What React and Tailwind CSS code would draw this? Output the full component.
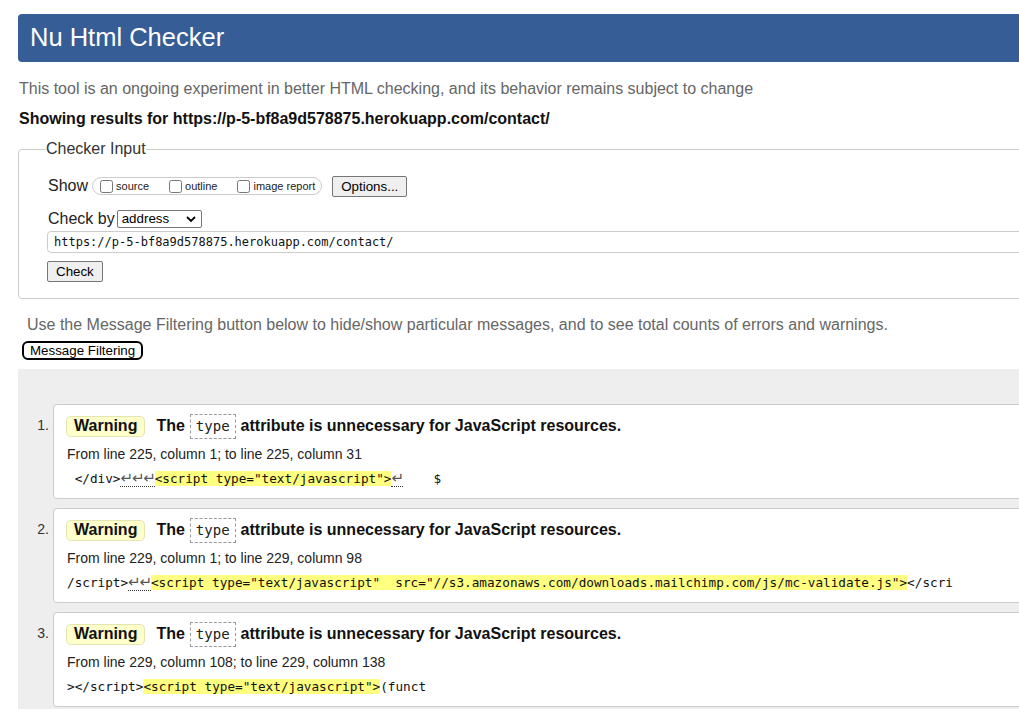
import React from "react";

const sans = { fontFamily: '"Liberation Sans", Arial, sans-serif' };
const mono = { fontFamily: '"DejaVu Sans Mono", monospace' };

const Lf = ({ n = 1, dotted = true }) => (
  <span className={dotted ? "border-b border-dotted border-[#333]" : ""}>
    {Array.from({ length: n }).map((_, i) => (
      <span
        key={i}
        className="inline-block w-[11.4px] text-center text-[15px] leading-none text-[#555]"
        style={{ fontFamily: '"DejaVu Sans", sans-serif' }}
      >
        ↵
      </span>
    ))}
  </span>
);

const Mark = ({ children }) => <span className="bg-[#ffff80]">{children}</span>;

const messages = [
  {
    from: "From line 225, column 1; to line 225, column 31",
    code: (
      <>
        {" </div>"}
        <Lf n={3} />
        <Mark>{'<script type="text/javascript">'}</Mark>
        <Lf n={1} />
        {"    $"}
      </>
    ),
  },
  {
    from: "From line 229, column 1; to line 229, column 98",
    code: (
      <>
        {"/script>"}
        <Lf n={2} />
        <Mark>{'<script type="text/javascript"  src="//s3.amazonaws.com/downloads.mailchimp.com/js/mc-validate.js">'}</Mark>
        {"</scri"}
      </>
    ),
  },
  {
    from: "From line 229, column 108; to line 229, column 138",
    code: (
      <>
        {"></script>"}
        <Mark>{'<script type="text/javascript">'}</Mark>
        {"(funct"}
      </>
    ),
  },
];

const Check = ({ label }) => (
  <label className="flex items-center text-[11px] text-[#222]">
    <input type="checkbox" className="m-0 mr-[3px] w-[13px] h-[13px]" />
    {label}
  </label>
);

export default function App() {
  return (
    <div className="w-[1019px] h-[709px] overflow-hidden bg-white text-black" style={sans}>
      <div className="w-[1120px] pl-[18px] pt-[14px]">
        {/* Header */}
        <div className="h-[48px] bg-[#365d95] rounded-[4px] flex items-center pl-[12px]">
          <h1 className="text-[25.5px] text-white leading-none">Nu Html Checker</h1>
        </div>

        <p className="mt-[17px] pl-[1px] text-[16px] leading-[20px] text-[#666]">
          This tool is an ongoing experiment in better HTML checking, and its behavior remains subject to change
        </p>
        <p className="mt-[10px] pl-[1px] text-[16px] leading-[20px] font-bold text-[#111]">
          Showing results for https://p-5-bf8a9d578875.herokuapp.com/contact/
        </p>

        {/* Checker input */}
        <fieldset className="mt-[10px] border border-[#ccc] rounded-[4px] pl-[29px] pb-[15px]">
          <legend className="-ml-[2px] text-[16px] leading-[20px] text-[#333]">Checker Input</legend>
          <div className="mt-[16px] flex items-center h-[22px]">
            <span className="text-[16px] text-[#222]">Show</span>
            <div className="ml-[4px] flex items-center h-[18px] border border-[#ccc] rounded-full pl-[7px] pr-[6px] gap-[20px]">
              <Check label="source" />
              <Check label="outline" />
              <Check label="image report" />
            </div>
            <button className="ml-[10px] h-[21px] px-[8px] bg-[#efefef] border border-[#767676] rounded-[2px] text-[13.33px] text-black">
              Options...
            </button>
          </div>
          <div className="mt-[11px] flex items-center h-[22px]">
            <span className="text-[16px] text-[#222]">Check by</span>
            <div className="relative ml-[2px] w-[85px] h-[18px] border border-[#767676] rounded-[2px] flex items-center pl-[4px] text-[13.33px]">
              address
              <svg className="absolute right-[5px] top-[5px]" width="10" height="7" viewBox="0 0 10 7">
                <path d="M1 1 L5 5 L9 1" fill="none" stroke="#000" strokeWidth="1.8" />
              </svg>
            </div>
          </div>
          <div className="mt-[1px] -ml-[1px] h-[22px] border border-[#ccc] rounded-[4px] flex items-center pl-[6px] text-[12px] text-[#111]" style={mono}>
            https://p-5-bf8a9d578875.herokuapp.com/contact/
          </div>
          <button className="mt-[8px] -ml-[1px] h-[21px] px-[8px] bg-[#efefef] border border-[#767676] rounded-[2px] text-[13.33px] text-black">
            Check
          </button>
        </fieldset>

        <p className="mt-[16px] pl-[9px] text-[16px] leading-[20px] text-[#666]">
          Use the Message Filtering button below to hide/show particular messages, and to see total counts of errors and warnings.
        </p>
        <button className="mt-[6px] ml-[4px] h-[19px] px-[6px] border-2 border-black rounded-[6px] text-[13.33px] leading-none text-black bg-white">
          Message Filtering
        </button>

        {/* Results */}
        <div className="mt-[7px] bg-[#eee] pt-[35px] pb-[20px] flex flex-col gap-[9px]">
          {messages.map((m, i) => (
            <div key={i} className="flex">
              <div className="w-[35px] shrink-0 pr-[4px] pt-[9px] text-right text-[14px] leading-[24px] text-[#333]">
                {i + 1}.
              </div>
              <div className="flex-1 bg-white border border-[#ccc] rounded-[4px] pl-[12px] pt-[9px] pb-[9px]">
                <div className="flex items-center h-[25px] text-[16px] font-bold text-[#111]">
                  <span className="h-[21px] flex items-center px-[7px] bg-[#ffffcc] border border-[#e4e4b0] rounded-[5px]">Warning</span>
                  <span className="ml-[11px]">The</span>
                  <code
                    className="mx-[5px] h-[25px] flex items-center px-[5px] border border-dashed border-[#999] font-normal text-[14px] text-[#222]"
                    style={mono}
                  >
                    type
                  </code>
                  <span>attribute is unnecessary for JavaScript resources.</span>
                </div>
                <p className="mt-[5px] pl-[1px] text-[14px] leading-[20px] text-[#222]">{m.from}</p>
                <p className="mt-[5px] pl-[1px] text-[12.7px] leading-[20px] whitespace-pre text-[#111]" style={mono}>
                  {m.code}
                </p>
              </div>
            </div>
          ))}
        </div>
      </div>
    </div>
  );
}
